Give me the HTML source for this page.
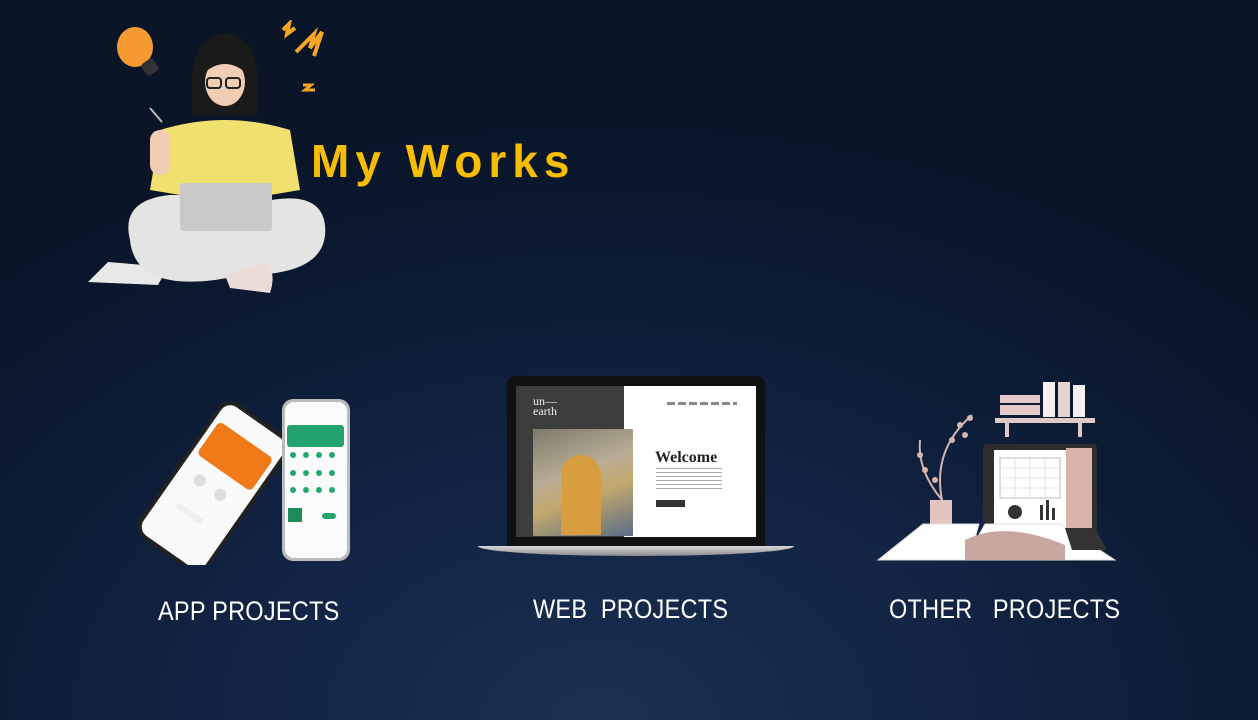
<!DOCTYPE html>
<html><head><meta charset="utf-8"><style>
*{margin:0;padding:0;box-sizing:border-box}
body{width:1258px;height:720px;overflow:hidden;position:relative;font-family:"Liberation Sans",sans-serif;
background:radial-gradient(ellipse 900px 600px at 600px 720px,#1a2f52 0%,#132445 40%,#0c1a33 75%,#0a1528 100%);}
.a{position:absolute}
.t{color:#fff;font-size:27px;letter-spacing:0.3px;white-space:pre;transform:scaleX(0.87);transform-origin:left}
.title{left:311px;top:138px;line-height:46px;color:#f7bd00;font-size:46px;font-weight:bold;letter-spacing:6px;white-space:pre}
</style></head><body>

<svg class="a" style="left:70px;top:20px" width="280" height="285" viewBox="70 20 280 285">
 <ellipse cx="135" cy="47" rx="18" ry="20" fill="#f59a32"/>
 <rect x="143" y="60" width="14" height="14" rx="3" fill="#333" transform="rotate(-35 150 67)"/>
 <path d="M283 30 l6 -6 l-2 10 l8 -6 M296 52 l18 -18 l-4 14 l12 -16 l-8 24" stroke="#f5a623" stroke-width="4" fill="none"/>
 <path d="M303 85 h8 l-6 5 h10" stroke="#f5a623" stroke-width="3" fill="none"/>
 <path d="M88 282 l20 -20 l60 5 l-10 18 z" fill="#e8e8e8"/>
 <ellipse cx="225" cy="73" rx="32" ry="40" fill="#1a1a1a"/>
 <rect x="192" y="70" width="66" height="45" fill="#1a1a1a"/>
 <ellipse cx="225" cy="82" rx="20" ry="24" fill="#f0cdb4"/>
 <path d="M205 72 q20 -16 40 0 v-20 h-40z" fill="#1a1a1a"/>
 <rect x="207" y="78" width="14" height="10" rx="3" fill="none" stroke="#222" stroke-width="2"/>
 <rect x="226" y="78" width="14" height="10" rx="3" fill="none" stroke="#222" stroke-width="2"/>
 <path d="M160 130 q65 -20 130 0 l10 60 l-30 5 l-5 -10 h-80 l-5 10 l-30 -5z" fill="#f0e070"/>
 <rect x="150" y="130" width="20" height="45" rx="10" fill="#f0cdb4"/>
 <line x1="150" y1="108" x2="162" y2="122" stroke="#bbb" stroke-width="2"/>
 <path d="M130 240 q-10 -40 40 -45 q60 0 80 10 q70 -20 75 20 q5 50 -80 50 l-30 5 q-80 10 -85 -40z" fill="#e4e4e2"/>
 <rect x="180" y="183" width="92" height="48" rx="3" fill="#c9c9c9"/>
 <path d="M225 275 l40 -12 q12 8 5 30 l-40 -5z" fill="#ecdcd8"/>
</svg>
<div class="a title">My Works</div>

<svg class="a" style="left:135px;top:395px" width="220" height="170" viewBox="135 395 220 170">
 <g transform="rotate(35 215 485)">
  <rect x="173" y="405" width="84" height="165" rx="14" fill="#222"/>
  <rect x="177" y="409" width="76" height="157" rx="11" fill="#fafafa"/>
  <rect x="182" y="430" width="66" height="40" rx="5" fill="#f07a18"/>
  <circle cx="200" cy="490" r="6" fill="#ddd"/><circle cx="225" cy="490" r="6" fill="#ddd"/>
  <rect x="195" y="520" width="30" height="6" fill="#eee"/>
 </g>
 <rect x="282" y="399" width="68" height="162" rx="11" fill="#bbb"/>
 <rect x="285" y="402" width="62" height="156" rx="9" fill="#fbfbfb"/>
 <rect x="287" y="425" width="57" height="22" rx="3" fill="#23a36b"/>
 <g fill="#27a870"><circle cx="293" cy="455" r="3"/><circle cx="306" cy="455" r="3"/><circle cx="319" cy="455" r="3"/><circle cx="332" cy="455" r="3"/><circle cx="293" cy="473" r="3"/><circle cx="306" cy="473" r="3"/><circle cx="319" cy="473" r="3"/><circle cx="332" cy="473" r="3"/><circle cx="293" cy="490" r="3"/><circle cx="306" cy="490" r="3"/><circle cx="319" cy="490" r="3"/><circle cx="332" cy="490" r="3"/></g>
 <rect x="288" y="508" width="14" height="14" fill="#1d8b5a"/><rect x="322" y="513" width="14" height="6" rx="3" fill="#23a36b"/>
</svg>

<div class="a" style="left:507px;top:376px;width:258px;height:170px;background:#111;border-radius:8px 8px 0 0"></div>
<div class="a" style="left:516px;top:386px;width:108px;height:151px;background:#3d3d3d"></div>
<div class="a" style="left:624px;top:386px;width:132px;height:151px;background:#fff"></div>
<div class="a" style="left:533px;top:396px;color:#eee;font:12px/10px 'Liberation Serif',serif">un—<br>earth</div>
<div class="a" style="left:533px;top:429px;width:100px;height:107px;background:linear-gradient(160deg,#7d7a6c,#b8ad96 40%,#c4a86c 60%,#5a6e86)"></div>
<div class="a" style="left:561px;top:455px;width:40px;height:80px;border-radius:20px 20px 0 0;background:#d79d3e"></div>
<div class="a" style="left:655px;top:449px;color:#222;font:bold 16px 'Liberation Serif',serif">Welcome</div>
<div class="a" style="left:656px;top:468px;width:66px;height:24px;background:repeating-linear-gradient(#aaa 0 1px,transparent 1px 4px)"></div>
<div class="a" style="left:656px;top:500px;width:29px;height:7px;background:#333"></div>
<div class="a" style="left:667px;top:402px;width:70px;height:3px;background:repeating-linear-gradient(90deg,#888 0 8px,transparent 8px 11px)"></div>
<div class="a" style="left:478px;top:546px;width:316px;height:10px;background:linear-gradient(#d8d8da,#8a8a8e);border-radius:0 0 50% 50%/0 0 100% 100%"></div>

<svg class="a" style="left:875px;top:378px" width="245" height="188" viewBox="875 378 245 188">
 <rect x="995" y="418" width="100" height="5" fill="#e0c8c4"/>
 <rect x="1005" y="423" width="4" height="14" fill="#e0c8c4"/><rect x="1078" y="423" width="4" height="14" fill="#e0c8c4"/>
 <rect x="1000" y="395" width="40" height="8" fill="#e4c9c6"/><rect x="1000" y="405" width="40" height="10" fill="#e4c9c6"/>
 <rect x="1043" y="382" width="12" height="35" fill="#f4f0ef"/><rect x="1058" y="382" width="12" height="35" fill="#e8d3d0"/><rect x="1073" y="385" width="12" height="32" fill="#f4f0ef"/>
 <path d="M942 500 q-10 -50 30 -85 M942 500 q-25 -30 -22 -60" stroke="#d6b4b0" stroke-width="2" fill="none"/>
 <g fill="#d6b4b0"><circle cx="960" cy="425" r="3"/><circle cx="970" cy="418" r="3"/><circle cx="952" cy="440" r="3"/><circle cx="965" cy="435" r="3"/><circle cx="920" cy="455" r="3"/><circle cx="925" cy="470" r="3"/><circle cx="935" cy="480" r="3"/></g>
 <rect x="930" y="500" width="22" height="26" fill="#e2c4c0"/>
 <rect x="983" y="444" width="114" height="88" rx="4" fill="#2d2d2d"/>
 <rect x="994" y="450" width="80" height="80" fill="#fff"/>
 <rect x="1066" y="448" width="26" height="80" fill="#d8b4ad"/>
 <path d="M1000 458 h60 v40 h-60z" fill="none" stroke="#aaa" stroke-width="0.8"/>
 <path d="M1000 468 h60 M1000 478 h60 M1000 488 h60 M1015 458 v40 M1030 458 v40 M1045 458 v40" stroke="#ccc" stroke-width="0.6"/>
 <g fill="#333"><rect x="1040" y="505" width="3" height="15"/><rect x="1046" y="500" width="3" height="20"/><rect x="1052" y="508" width="3" height="12"/></g>
 <circle cx="1015" cy="512" r="7" fill="#333"/>
 <path d="M878 560 l45 -36 h56 l-10 36z" fill="#fff" stroke="#ddd"/>
 <path d="M965 560 l20 -36 h75 l55 36z" fill="#fff" stroke="#ddd"/>
 <path d="M1065 528 h30 l12 22 h-35z" fill="#333"/>
 <path d="M965 540 q40 -20 100 5 v15 h-100z" fill="#c9a7a1"/>
</svg>

<div class="a t" style="left:158px;top:596px">APP PROJECTS</div>
<div class="a t" style="left:533px;top:594px">WEB  PROJECTS</div>
<div class="a t" style="left:889px;top:594px">OTHER   PROJECTS</div>
</body></html>
